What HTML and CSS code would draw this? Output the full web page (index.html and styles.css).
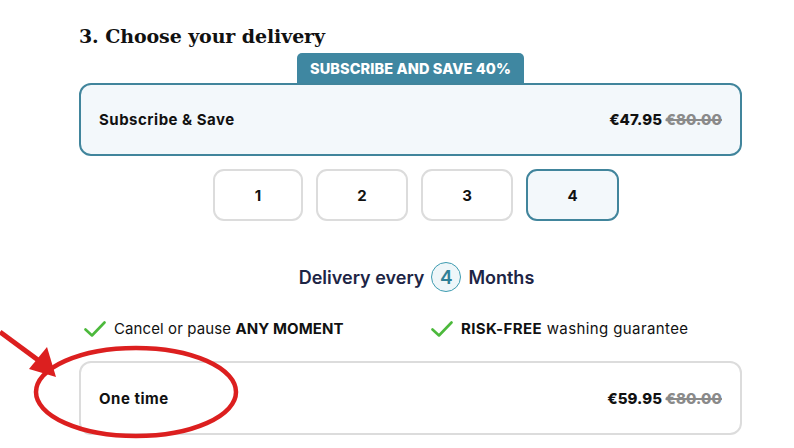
FILE: index.html
```html
<!DOCTYPE html>
<html>
<head>
<meta charset="utf-8">
<link rel="stylesheet" href="styles.css">
</head>
<body>
<div class="page">
  <h2 class="title">3. Choose your delivery</h2>
  <div class="sub-block">
    <div class="badge-row"><span class="badge">SUBSCRIBE AND SAVE 40%</span></div>
    <div class="card card-selected">
      <span class="card-name">Subscribe &amp; Save</span>
      <span class="price">€47.95 <s class="old">€80.00</s></span>
    </div>
  </div>
  <div class="options">
    <div class="opt opt-a">1</div>
    <div class="opt">2</div>
    <div class="opt">3</div>
    <div class="opt opt-selected">4</div>
  </div>
  <div class="every">Delivery every <span class="num">4</span> Months</div>
  <div class="perks">
    <div class="perk"><svg class="check" viewBox="0 0 22 16" width="22" height="16"><path d="M1.5 8.5 L8 14.5 L20.5 1.5" fill="none" stroke="#4cb93c" stroke-width="2.6" stroke-linecap="round" stroke-linejoin="round"/></svg><span>Cancel or pause <b>ANY MOMENT</b></span></div>
    <div class="perk perk-wide"><svg class="check" viewBox="0 0 22 16" width="22" height="16"><path d="M1.5 8.5 L8 14.5 L20.5 1.5" fill="none" stroke="#4cb93c" stroke-width="2.6" stroke-linecap="round" stroke-linejoin="round"/></svg><span><b>RISK-FREE</b> washing guarantee</span></div>
  </div>
  <div class="card card-plain">
    <span class="card-name">One time</span>
    <span class="price">€59.95 <s class="old">€80.00</s></span>
  </div>
</div>
<svg class="annot" width="794" height="448" viewBox="0 0 794 448">
  <ellipse cx="136" cy="392" rx="100" ry="44" fill="none" stroke="#dc1f1f" stroke-width="4.5"/>
  <line x1="0" y1="332" x2="38" y2="360" stroke="#dc1f1f" stroke-width="5"/>
  <polygon points="56,377 29,369 47,347" fill="#dc1f1f"/>
</svg>
</body>
</html>
```
FILE: styles.css
```css
html, body {
  margin: 0;
  padding: 0;
  background: #ffffff;
}
body {
  width: 794px;
  height: 448px;
  overflow: hidden;
  position: relative;
  font-family: "Inter", "Open Sans", sans-serif;
  color: #111;
}
.page {
  width: 663px;
  margin-left: 79px;
  padding-top: 23px;
}
.title {
  margin: 0;
  font-family: "DejaVu Serif", "Liberation Serif", serif;
  font-weight: 700;
  font-size: 19px;
  line-height: 26px;
  color: #111;
  letter-spacing: -0.1px;
}
.badge-row {
  display: flex;
  padding-left: 218px;
  margin-top: 4px;
}
.badge {
  width: 227px;
  height: 30px;
  box-sizing: border-box;
  background: #3f87a1;
  color: #fff;
  font-weight: 800;
  font-size: 14.5px;
  letter-spacing: 0.1px;
  border-radius: 5px 5px 0 0;
  display: flex;
  align-items: center;
  justify-content: center;
}
.card {
  box-sizing: border-box;
  height: 73px;
  border-radius: 12px;
  display: flex;
  align-items: center;
  justify-content: space-between;
  padding: 0 18px 0 18px;
}
.card-selected {
  border: 2px solid #41859c;
  background: #f3f8fb;
}
.card-plain {
  border: 2px solid #dcdcdc;
  background: #fff;
  margin-top: 23px;
  height: 74px;
}
.card-name {
  font-weight: 700;
  font-size: 15px;
  letter-spacing: 0.5px;
}
.price {
  font-weight: 800;
  font-size: 15px;
  letter-spacing: 0.1px;
}
.old {
  color: #8a8a8a;
  text-decoration-thickness: 1.5px;
}
.options {
  display: flex;
  justify-content: center;
  gap: 13px;
  margin-top: 13px;
  padding-left: 11px;
}
.opt {
  width: 92px;
  height: 52px;
  box-sizing: border-box;
  border: 2px solid #dcdcdc;
  border-radius: 11px;
  display: flex;
  align-items: center;
  justify-content: center;
  font-weight: 700;
  font-size: 15px;
}
.opt-a {
  width: 90px;
}
.opt-selected {
  border-color: #41859c;
  background: #f3f8fb;
  width: 93px;
}
.every {
  margin-top: 40px;
  display: flex;
  align-items: center;
  justify-content: center;
  gap: 7px;
  font-weight: 600;
  font-size: 18px;
  color: #1d2545;
  height: 32px;
  padding-left: 12px;
}
.num {
  width: 30px;
  height: 30px;
  box-sizing: border-box;
  border: 1.5px solid #3d9bb0;
  border-radius: 50%;
  background: #eef6f9;
  color: #2f7f96;
  display: flex;
  align-items: center;
  justify-content: center;
  font-size: 19px;
  font-weight: 600;
}
.perks {
  display: grid;
  grid-template-columns: 347px 1fr;
  margin-top: 26px;
  padding-left: 5px;
}
.perk {
  display: flex;
  align-items: center;
  gap: 8px;
  font-size: 15px;
  letter-spacing: 0.1px;
  color: #111;
}
.perk-wide {
  letter-spacing: 0.4px;
}
.perk b {
  font-weight: 700;
}
.check {
  flex: none;
}
.annot {
  position: absolute;
  left: 0;
  top: 0;
  pointer-events: none;
}
```
